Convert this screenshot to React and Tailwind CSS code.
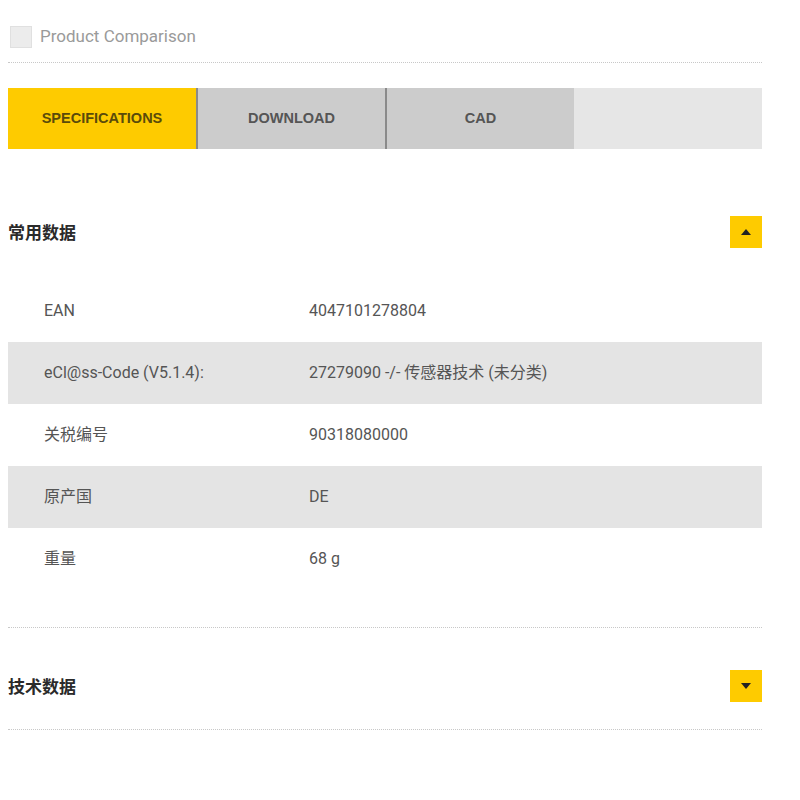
const rows = [
  { label: "EAN", value: "4047101278804" },
  { label: "eCl@ss-Code (V5.1.4):", value: "27279090 -/- 传感器技术 (未分类)" },
  { label: "关税编号", value: "90318080000" },
  { label: "原产国", value: "DE" },
  { label: "重量", value: "68 g" },
];

const tabs = ["SPECIFICATIONS", "DOWNLOAD", "CAD"];

const font = "font-['Roboto','Liberation_Sans','Noto_Sans_CJK_SC',sans-serif]";

const ToggleButton = ({ open }) => (
  <button className="w-8 h-8 bg-[#fecb00] flex items-center justify-center">
    <svg width="10" height="6" viewBox="0 0 10 6">
      {open ? (
        <path d="M0 6 L5 0 L10 6 Z" fill="#222" />
      ) : (
        <path d="M0 0 L10 0 L5 6 Z" fill="#222" />
      )}
    </svg>
  </button>
);

const SectionHeader = ({ title, open }) => (
  <div className="flex items-center justify-between h-[64px]">
    <h3 className="text-[17px] font-bold text-[#2a2a2a] font-['Noto_Sans_CJK_SC',sans-serif]">
      {title}
    </h3>
    <ToggleButton open={open} />
  </div>
);

export default function App() {
  return (
    <div className={`w-[800px] h-[800px] bg-white ${font}`}>
      <div className="w-[754px] ml-2">
        {/* compare checkbox */}
        <div className="flex items-center h-[63px] pt-[12px] border-b border-dotted border-[#c8c8c8]">
          <span className="w-[22px] h-[22px] ml-[2px] bg-[#ececec] border border-[#e0e0e0]" />
          <span className="ml-[8px] text-[17px] text-[#9a9a9a]">Product Comparison</span>
        </div>

        {/* tabs */}
        <div className="flex mt-[25px] h-[61px] bg-[#e6e6e6] font-['Liberation_Sans',sans-serif]">
          {tabs.map((t, i) => (
            <div
              key={t}
              className={
                i === 0
                  ? "w-[188px] flex items-center justify-center bg-[#fecb00] text-[#5a4b0a] text-[14.5px] font-bold"
                  : "w-[189px] flex items-center justify-center bg-[#cccccc] text-[#555] text-[14.5px] font-bold border-l-2 border-[#8a8a8a]"
              }
            >
              {t}
            </div>
          ))}
        </div>

        <div className="mt-[51px] mb-[16px]">
          <SectionHeader title="常用数据" open />
        </div>

        <div>
          {rows.map((r, i) => (
            <div
              key={r.label}
              className={`flex items-center h-[62px] text-[16px] text-[#555] ${
                i % 2 === 1 ? "bg-[#e4e4e4]" : "bg-white"
              }`}
            >
              <div className="w-[301px] pl-9">{r.label}</div>
              <div>{r.value}</div>
            </div>
          ))}
        </div>

        <div className="mt-[37px] border-t border-dotted border-[#c8c8c8]">
          <div className="mt-[26px]">
            <SectionHeader title="技术数据" />
          </div>
          <div className="mt-[11px] border-t border-dotted border-[#c8c8c8]" />
        </div>
      </div>
    </div>
  );
}
